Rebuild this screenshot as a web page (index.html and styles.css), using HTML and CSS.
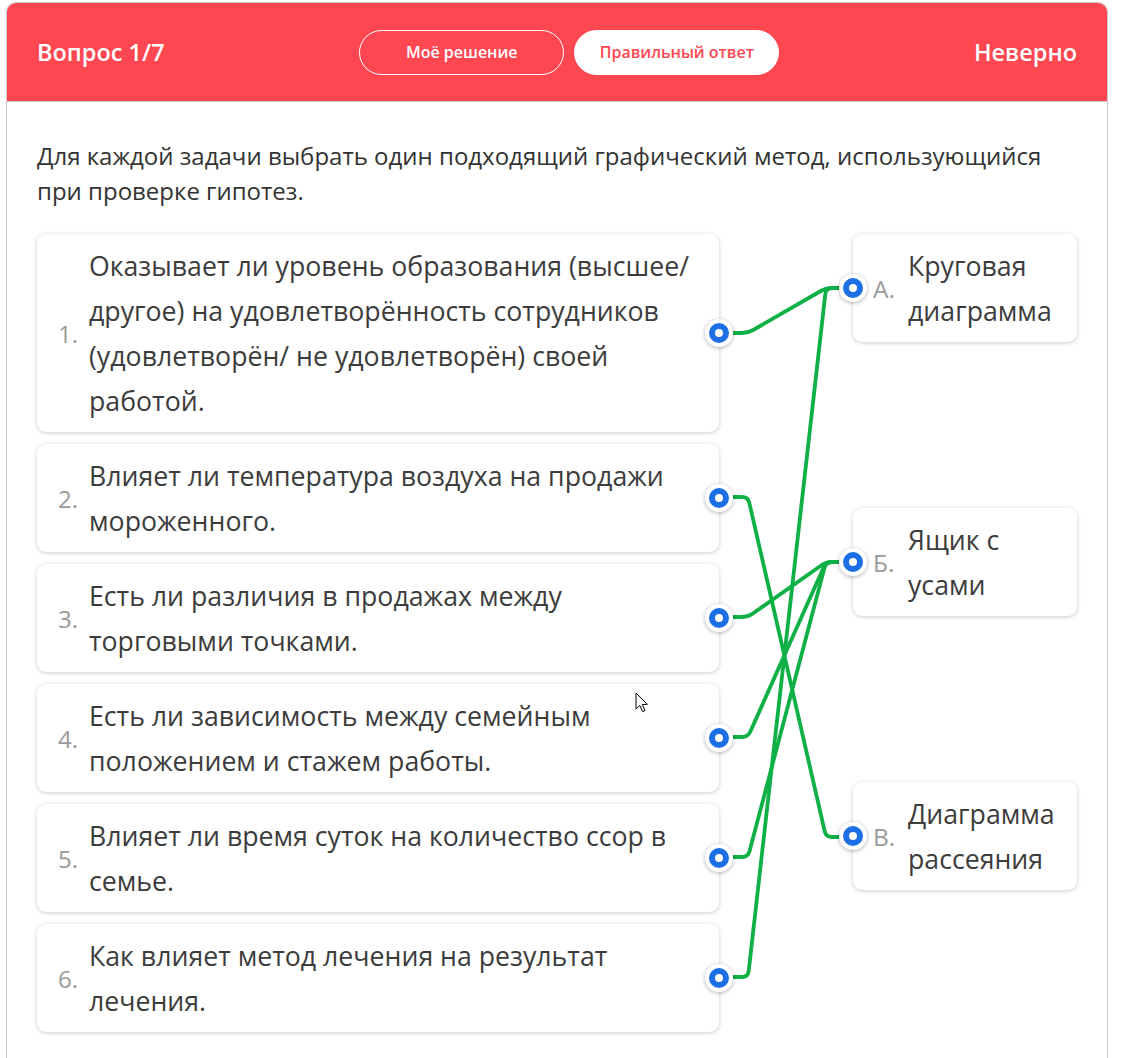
FILE: index.html
```html
<!DOCTYPE html>
<html lang="ru">
<head>
<meta charset="utf-8">
<title>Вопрос 1/7</title>
<link rel="stylesheet" href="styles.css">
</head>
<body>
<div class="quiz">
  <header class="quiz-head">
    <div class="quiz-title">Вопрос 1/7</div>
    <div class="tabs">
      <button class="tab">Моё решение</button>
      <button class="tab tab-active">Правильный ответ</button>
    </div>
    <div class="quiz-status">Неверно</div>
  </header>
  <div class="quiz-body">
    <p class="question">Для каждой задачи выбрать один подходящий графический метод, использующийся при проверке гипотез.</p>
    <div class="match">
      <svg class="links" viewBox="37 234 1040 800" width="1040" height="800" aria-hidden="true">
        <g class="halo">
          <path d="M733 333 H742 Q748 333 753.2 330 L820.8 291 Q826 288 832 288 H840"/>
          <path d="M733 497 H742 Q748 497 749.3 502.8 L824.7 831.2 Q826 837 832 837 H840"/>
          <path d="M733 617 H742 Q748 617 752.9 613.5 L821.1 565.5 Q826 562 832 562 H840"/>
          <path d="M733 737 H742 Q748 737 750.4 731.5 L823.6 567.5 Q826 562 832 562 H840"/>
          <path d="M733 857 H742 Q748 857 749.5 851.2 L824.5 567.8 Q826 562 832 562 H840"/>
          <path d="M733 977 H742 Q748 977 748.7 971 L825.3 294 Q826 288 832 288 H840"/>
        </g>
        <g class="line">
          <path d="M733 333 H742 Q748 333 753.2 330 L820.8 291 Q826 288 832 288 H840"/>
          <path d="M733 497 H742 Q748 497 749.3 502.8 L824.7 831.2 Q826 837 832 837 H840"/>
          <path d="M733 617 H742 Q748 617 752.9 613.5 L821.1 565.5 Q826 562 832 562 H840"/>
          <path d="M733 737 H742 Q748 737 750.4 731.5 L823.6 567.5 Q826 562 832 562 H840"/>
          <path d="M733 857 H742 Q748 857 749.5 851.2 L824.5 567.8 Q826 562 832 562 H840"/>
          <path d="M733 977 H742 Q748 977 748.7 971 L825.3 294 Q826 288 832 288 H840"/>
        </g>
      </svg>
      <div class="col-left">
        <div class="item"><span class="num">1.</span><span class="text">Оказывает ли уровень образования (высшее/ другое) на удовлетворённость сотрудников (удовлетворён/ не удовлетворён) своей работой.</span><span class="dot dot-right"></span></div>
        <div class="item"><span class="num">2.</span><span class="text">Влияет ли температура воздуха на продажи мороженного.</span><span class="dot dot-right"></span></div>
        <div class="item"><span class="num">3.</span><span class="text">Есть ли различия в продажах между торговыми точками.</span><span class="dot dot-right"></span></div>
        <div class="item"><span class="num">4.</span><span class="text">Есть ли зависимость между семейным положением и стажем работы.</span><span class="dot dot-right"></span></div>
        <div class="item"><span class="num">5.</span><span class="text">Влияет ли время суток на количество ссор в семье.</span><span class="dot dot-right"></span></div>
        <div class="item"><span class="num">6.</span><span class="text">Как влияет метод лечения на результат лечения.</span><span class="dot dot-right"></span></div>
      </div>
      <div class="col-right">
        <div class="item item-option"><span class="dot dot-left"></span><span class="letter">А.</span><span class="text">Круговая диаграмма</span></div>
        <div class="item item-option"><span class="dot dot-left"></span><span class="letter">Б.</span><span class="text">Ящик с усами</span></div>
        <div class="item item-option"><span class="dot dot-left"></span><span class="letter">В.</span><span class="text">Диаграмма рассеяния</span></div>
      </div>
    </div>
  </div>
</div>
<svg class="cursor" width="14" height="22" viewBox="0 0 14 22" aria-hidden="true"><path d="M1 1 L1 17 L4.8 13.4 L7.6 19.6 L10 18.5 L7.3 12.5 L12.4 12.3 Z" fill="#fff" stroke="#000" stroke-width="1" stroke-linejoin="round"/></svg>
</body>
</html>
```

FILE: styles.css
```css
html, body {
  margin: 0;
  padding: 0;
  background: #fff;
}
body {
  font-family: "Open Sans", "Noto Sans", sans-serif;
  color: #333;
  position: relative;
}
.quiz {
  margin: 2px 16px 0 6px;
  border: 1px solid #c9c9c9;
  border-bottom: none;
  border-radius: 10px 10px 0 0;
  overflow: hidden;
  padding-bottom: 40px;
}
.quiz-head {
  height: 98px;
  background: #fe4751;
  border-bottom: 1px solid #c9c9c9;
  display: flex;
  align-items: center;
  justify-content: space-between;
  padding: 0 30px;
  color: #fff;
}
.quiz-title, .quiz-status {
  font-size: 23.5px;
  font-weight: 600;
}
.tabs {
  display: flex;
  gap: 10px;
}
.tab {
  width: 205px;
  height: 45px;
  border-radius: 23px;
  border: 1px solid #fff;
  background: transparent;
  color: #fff;
  font-family: inherit;
  font-size: 16px;
  font-weight: 600;
  cursor: pointer;
}
.tab-active {
  background: #fff;
  color: #fe4751;
}
.quiz-body {
  padding: 36px 30px 0;
}
.question {
  margin: 0 0 26px;
  font-size: 24px;
  line-height: 35px;
  max-width: 1010px;
  color: #333;
}
.match {
  position: relative;
  display: flex;
  justify-content: space-between;
}
.links {
  position: absolute;
  left: 0;
  top: 0;
  z-index: 1;
  fill: none;
  pointer-events: none;
}
.links .halo path {
  stroke: #fff;
  stroke-width: 6.5;
}
.links .line path {
  stroke: #0fb046;
  stroke-width: 3.8;
  stroke-linejoin: round;
}
.col-left {
  width: 682px;
  display: flex;
  flex-direction: column;
  gap: 12px;
}
.col-right {
  width: 224px;
  display: flex;
  flex-direction: column;
  gap: 166px;
}
.item {
  position: relative;
  display: flex;
  align-items: center;
  background: #fff;
  border-radius: 9px;
  box-shadow: 0 1px 4px rgba(60, 70, 110, 0.28);
  padding: 9px 0 9px 21px;
  font-size: 26.7px;
  line-height: 45px;
  color: #3c3c3c;
}
.item .text {
  width: 604px;
}
.num {
  flex: none;
  width: 31px;
  color: #9a9a9a;
  font-size: 24px;
}
.item-option {
  padding: 9px 9px 9px 20px;
}
.item-option .text {
  width: auto;
  flex: 1;
}
.letter {
  flex: none;
  width: 35px;
  color: #9a9a9a;
  font-size: 24.5px;
}
.dot {
  position: absolute;
  top: 50%;
  width: 28px;
  height: 28px;
  margin-top: -14px;
  border-radius: 50%;
  background: #fff;
  box-shadow: 0 1px 4px rgba(0, 0, 0, 0.3);
  z-index: 2;
}
.dot::after {
  content: "";
  position: absolute;
  left: 4px;
  top: 4px;
  width: 8px;
  height: 8px;
  border: 6px solid #1d6fe6;
  border-radius: 50%;
}
.dot-right {
  right: -14px;
}
.dot-left {
  left: -14px;
}
.cursor {
  position: absolute;
  left: 635px;
  top: 692px;
  z-index: 5;
}
```
